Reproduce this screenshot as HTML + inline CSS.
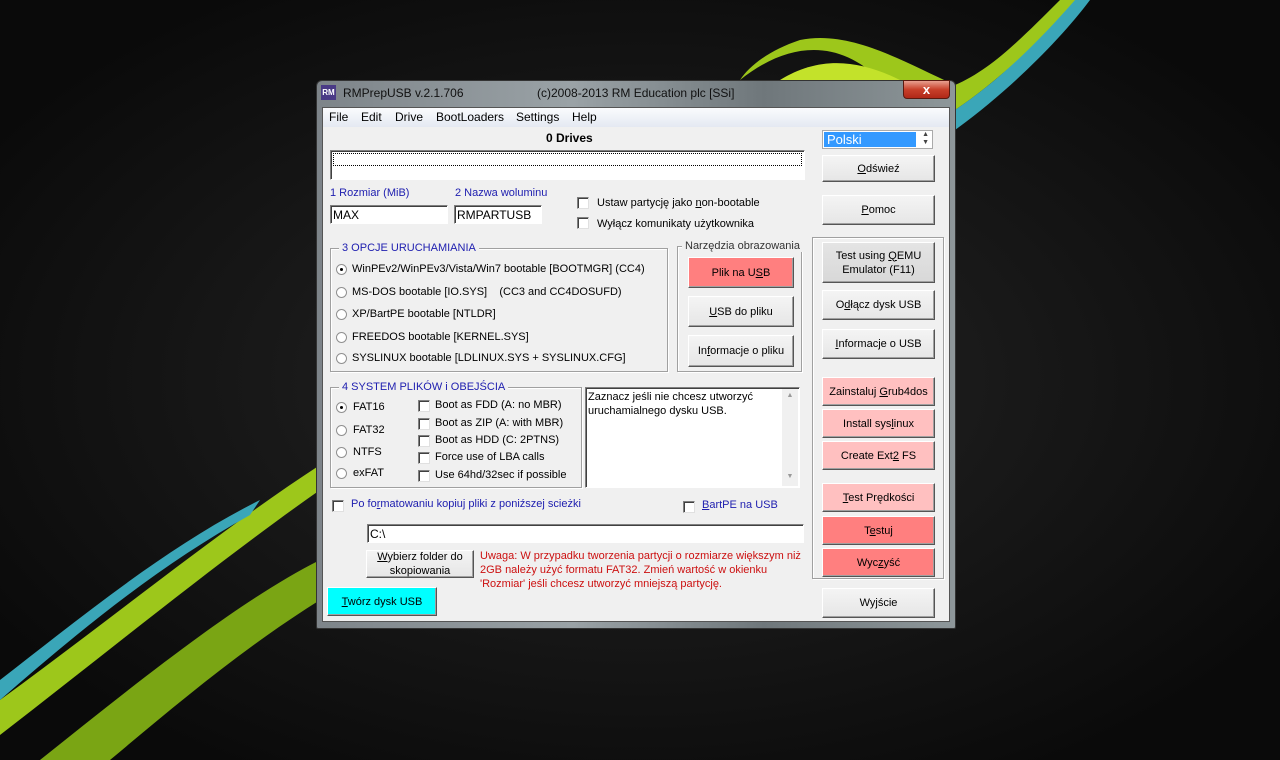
<!DOCTYPE html>
<html><head><meta charset="utf-8"><style>
*{box-sizing:border-box;margin:0;padding:0}
body{width:1280px;height:760px;overflow:hidden;background:#161616;position:relative;font-family:"Liberation Sans",sans-serif;font-size:11px;color:#000}
.a{position:absolute;white-space:nowrap}
.btn{position:absolute;background:linear-gradient(#f4f4f4,#e6e6e6);border:1px solid;border-color:#fff #555 #555 #fff;box-shadow:inset -1px -1px 0 #a0a0a0;display:flex;align-items:center;justify-content:center;text-align:center;line-height:14px;font-size:11px}
.pk{background:#ffc0c0}.rd{background:#ff7f7f}
.in{position:absolute;background:#fff;border:1px solid;border-color:#808080 #fff #fff #808080;box-shadow:inset 1px 1px 0 #404040;padding:2px 2px;font-size:12px}
.grp{position:absolute;border:1px solid #a0a0a0;box-shadow:1px 1px 0 #fff,inset 1px 1px 0 #fff}
.gt{position:absolute;background:#f0f0f0;padding:0 3px;font-size:11px;top:-7px;left:8px;color:#2020b0;white-space:nowrap}
.rb{position:absolute;width:11px;height:11px;border-radius:50%;background:#fff;border:1px solid #909090}
.rb.on::after{content:"";position:absolute;left:3px;top:3px;width:3px;height:3px;border-radius:50%;background:#000}
.cb{position:absolute;width:12px;height:12px;background:#fff;border:1px solid;border-color:#808080 #e0e0e0 #e0e0e0 #808080;box-shadow:inset 1px 1px 0 #404040}
u{text-decoration:underline}
.m span{position:absolute;top:0}
</style></head><body>
<svg class="a" style="left:0;top:0" width="1280" height="760">
<defs><radialGradient id="g" cx="50%" cy="50%" r="60%"><stop offset="0" stop-color="#262626"/><stop offset="1" stop-color="#0a0a0a"/></radialGradient></defs>
<rect width="1280" height="760" fill="url(#g)"/>
<path d="M0 700 C110 620 220 530 320 465 L320 490 C220 560 110 650 0 735Z" fill="#9dc71b"/>
<path d="M0 680 C90 610 170 545 260 500 L250 515 C160 565 80 630 0 700Z" fill="#3aa6b8"/>
<path d="M40 760 C140 680 240 600 320 560 L320 600 C240 650 170 710 110 760Z" fill="#7aa514"/>
<path d="M740 80 C790 40 840 40 880 80 L955 110 C1000 80 1050 30 1085 0 L1060 0 C1020 40 990 70 955 85 C900 60 850 30 800 40 C770 50 750 65 740 80Z" fill="#9dc71b"/>
<path d="M955 110 C1000 80 1040 40 1075 0 L1090 0 C1060 40 1010 90 955 130Z" fill="#3aa6b8"/>
<path d="M780 80 C820 55 860 60 900 80Z" fill="#c3e22a"/>
</svg>
<div class="a" style="left:316px;top:80px;width:640px;height:549px;background:linear-gradient(90deg,#7d8489,#9aa2a6 40%,#6f777b 70%,#8e979a);border:1px solid #333;border-radius:6px 6px 2px 2px"></div>
<div class="a" style="left:321px;top:85px;width:15px;height:15px;background:#4a3a86;color:#fff;font-size:8px;font-weight:bold;text-align:center;line-height:15px">RM</div>
<div class="a" style="left:343px;top:86px;font-size:12px;color:#111">RMPrepUSB v.2.1.706</div>
<div class="a" style="left:537px;top:86px;font-size:12px;color:#111">(c)2008-2013 RM Education plc [SSi]</div>
<div class="a" style="left:903px;top:80px;width:47px;height:19px;background:linear-gradient(#e8a090,#c8402a 50%,#b02818);border:1px solid #5a1a10;border-radius:0 0 4px 4px;color:#fff;font-weight:bold;text-align:center;line-height:17px;font-size:13px">x</div>
<div class="a" style="left:322px;top:107px;width:628px;height:515px;background:#f0f0f0;border:1px solid #555"></div>
<div class="a" style="left:323px;top:108px;width:626px;height:19px;background:linear-gradient(#fafbfd,#e4e9f2)"></div>
<div class="a m" style="left:0;top:110px;font-size:12px"><span style="left:329px">File</span><span style="left:361px">Edit</span><span style="left:395px">Drive</span><span style="left:436px">BootLoaders</span><span style="left:516px">Settings</span><span style="left:572px">Help</span></div>
<div class="a" style="left:546px;top:131px;font-weight:bold;font-size:12px">0 Drives</div>
<div class="in" style="left:330px;top:150px;width:475px;height:30px"><div style="border:1px dotted #000;height:13px"></div></div>
<div class="a" style="left:822px;top:130px;width:111px;height:19px;background:#fff;border:1px solid #aaa"><div style="position:absolute;left:1px;top:1px;width:92px;height:15px;background:#3399ff;color:#fff;font-size:13px;padding-left:3px;line-height:15px">Polski</div><div style="position:absolute;right:3px;top:0;font-size:7px;line-height:8px;color:#444">▲<br>▼</div></div>
<div class="btn" style="left:822px;top:155px;width:113px;height:27px"><span><u>O</u>dświeź</span></div>
<div class="btn" style="left:822px;top:195px;width:113px;height:30px"><span><u>P</u>omoc</span></div>
<div class="a" style="left:330px;top:187px;color:#2020b0">1 Rozmiar (MiB)</div>
<div class="a" style="left:455px;top:187px;color:#2020b0">2 Nazwa woluminu</div>
<div class="in" style="left:330px;top:205px;width:118px;height:19px">MAX</div>
<div class="in" style="left:454px;top:205px;width:88px;height:19px">RMPARTUSB</div>
<div class="cb" style="left:577px;top:197px"></div><div class="a" style="left:597px;top:197px">Ustaw partycję jako <u>n</u>on-bootable</div>
<div class="cb" style="left:577px;top:217px"></div><div class="a" style="left:597px;top:218px">Wyłącz komunikaty użytkownika</div>
<div class="grp" style="left:330px;top:248px;width:338px;height:124px"><div class="gt">3 OPCJE URUCHAMIANIA</div></div>
<div class="rb on" style="left:336px;top:264px"></div><div class="a" style="left:352px;top:263px">WinPEv2/WinPEv3/Vista/Win7 bootable [BOOTMGR] (CC4)</div>
<div class="rb" style="left:336px;top:287px"></div><div class="a" style="left:352px;top:286px">MS-DOS bootable [IO.SYS]&nbsp;&nbsp;&nbsp;&nbsp;(CC3 and CC4DOSUFD)</div>
<div class="rb" style="left:336px;top:309px"></div><div class="a" style="left:352px;top:308px">XP/BartPE bootable [NTLDR]</div>
<div class="rb" style="left:336px;top:332px"></div><div class="a" style="left:352px;top:331px">FREEDOS bootable [KERNEL.SYS]</div>
<div class="rb" style="left:336px;top:353px"></div><div class="a" style="left:352px;top:352px">SYSLINUX bootable [LDLINUX.SYS + SYSLINUX.CFG]</div>
<div class="grp" style="left:677px;top:246px;width:125px;height:126px"><div class="gt" style="color:#333;left:4px">Narzędzia obrazowania</div></div>
<div class="btn rd" style="left:688px;top:257px;width:106px;height:31px"><span>Plik na U<u>S</u>B</span></div>
<div class="btn" style="left:688px;top:296px;width:106px;height:31px"><span><u>U</u>SB do pliku</span></div>
<div class="btn" style="left:688px;top:335px;width:106px;height:32px"><span>In<u>f</u>ormacje o pliku</span></div>
<div class="grp" style="left:812px;top:237px;width:132px;height:342px"></div>
<div class="btn" style="left:822px;top:242px;width:113px;height:41px;background:linear-gradient(#e4e4e4,#d8d8d8)"><span>Test using <u>Q</u>EMU<br>Emulator (F11)</span></div>
<div class="btn" style="left:822px;top:290px;width:113px;height:30px"><span>O<u>d</u>łącz dysk USB</span></div>
<div class="btn" style="left:822px;top:329px;width:113px;height:30px"><span><u>I</u>nformacje o USB</span></div>
<div class="btn pk" style="left:822px;top:377px;width:113px;height:29px"><span>Zainstaluj <u>G</u>rub4dos</span></div>
<div class="btn pk" style="left:822px;top:409px;width:113px;height:29px"><span>Install sys<u>l</u>inux</span></div>
<div class="btn pk" style="left:822px;top:441px;width:113px;height:29px"><span>Create Ext<u>2</u> FS</span></div>
<div class="btn pk" style="left:822px;top:483px;width:113px;height:29px"><span><u>T</u>est Prędkości</span></div>
<div class="btn rd" style="left:822px;top:516px;width:113px;height:29px"><span>T<u>e</u>stuj</span></div>
<div class="btn rd" style="left:822px;top:548px;width:113px;height:29px"><span>Wyc<u>z</u>yść</span></div>
<div class="btn" style="left:822px;top:588px;width:113px;height:30px"><span>Wy<u>j</u>ście</span></div>
<div class="grp" style="left:330px;top:387px;width:252px;height:101px"><div class="gt">4 SYSTEM PLIKÓW i OBEJŚCIA</div></div>
<div class="rb on" style="left:336px;top:402px"></div><div class="a" style="left:353px;top:401px">FAT16</div>
<div class="rb" style="left:336px;top:425px"></div><div class="a" style="left:353px;top:424px">FAT32</div>
<div class="rb" style="left:336px;top:447px"></div><div class="a" style="left:353px;top:446px">NTFS</div>
<div class="rb" style="left:336px;top:468px"></div><div class="a" style="left:353px;top:467px">exFAT</div>
<div class="cb" style="left:418px;top:400px"></div><div class="a" style="left:435px;top:399px">Boot as FDD (A: no MBR)</div>
<div class="cb" style="left:418px;top:418px"></div><div class="a" style="left:435px;top:417px">Boot as ZIP (A: with MBR)</div>
<div class="cb" style="left:418px;top:435px"></div><div class="a" style="left:435px;top:434px">Boot as HDD (C: 2PTNS)</div>
<div class="cb" style="left:418px;top:452px"></div><div class="a" style="left:435px;top:451px">Force use of LBA calls</div>
<div class="cb" style="left:418px;top:470px"></div><div class="a" style="left:435px;top:469px">Use 64hd/32sec if possible</div>
<div class="in" style="left:585px;top:387px;width:215px;height:101px;font-size:11px;line-height:14px;white-space:normal;padding-right:20px">Zaznacz jeśli nie chcesz utworzyć uruchamialnego dysku USB.<div style="position:absolute;right:1px;top:1px;width:16px;height:97px;background:#f0f0f0;font-size:7px;color:#999;text-align:center">▲<div style="position:absolute;bottom:2px;width:16px">▼</div></div></div>
<div class="cb" style="left:332px;top:500px"></div><div class="a" style="left:351px;top:498px;color:#2020b0">Po fo<u>r</u>matowaniu kopiuj pliki z poniźszej scieżki</div>
<div class="cb" style="left:683px;top:501px"></div><div class="a" style="left:702px;top:499px;color:#2020b0"><u>B</u>artPE na USB</div>
<div class="in" style="left:367px;top:524px;width:437px;height:19px">C:\</div>
<div class="btn" style="left:366px;top:550px;width:108px;height:28px"><span><u>W</u>ybierz folder do<br>skopiowania</span></div>
<div class="a" style="left:480px;top:549px;color:#cc1010;line-height:14px">Uwaga: W przypadku tworzenia partycji o rozmiarze większym niż<br>2GB należy użyć formatu FAT32. Zmień wartość w okienku<br>'Rozmiar' jeśli chcesz utworzyć mniejszą partycję.</div>
<div class="btn" style="left:327px;top:587px;width:110px;height:29px;background:#00ffff"><span><u>T</u>wórz dysk USB</span></div>
</body></html>
